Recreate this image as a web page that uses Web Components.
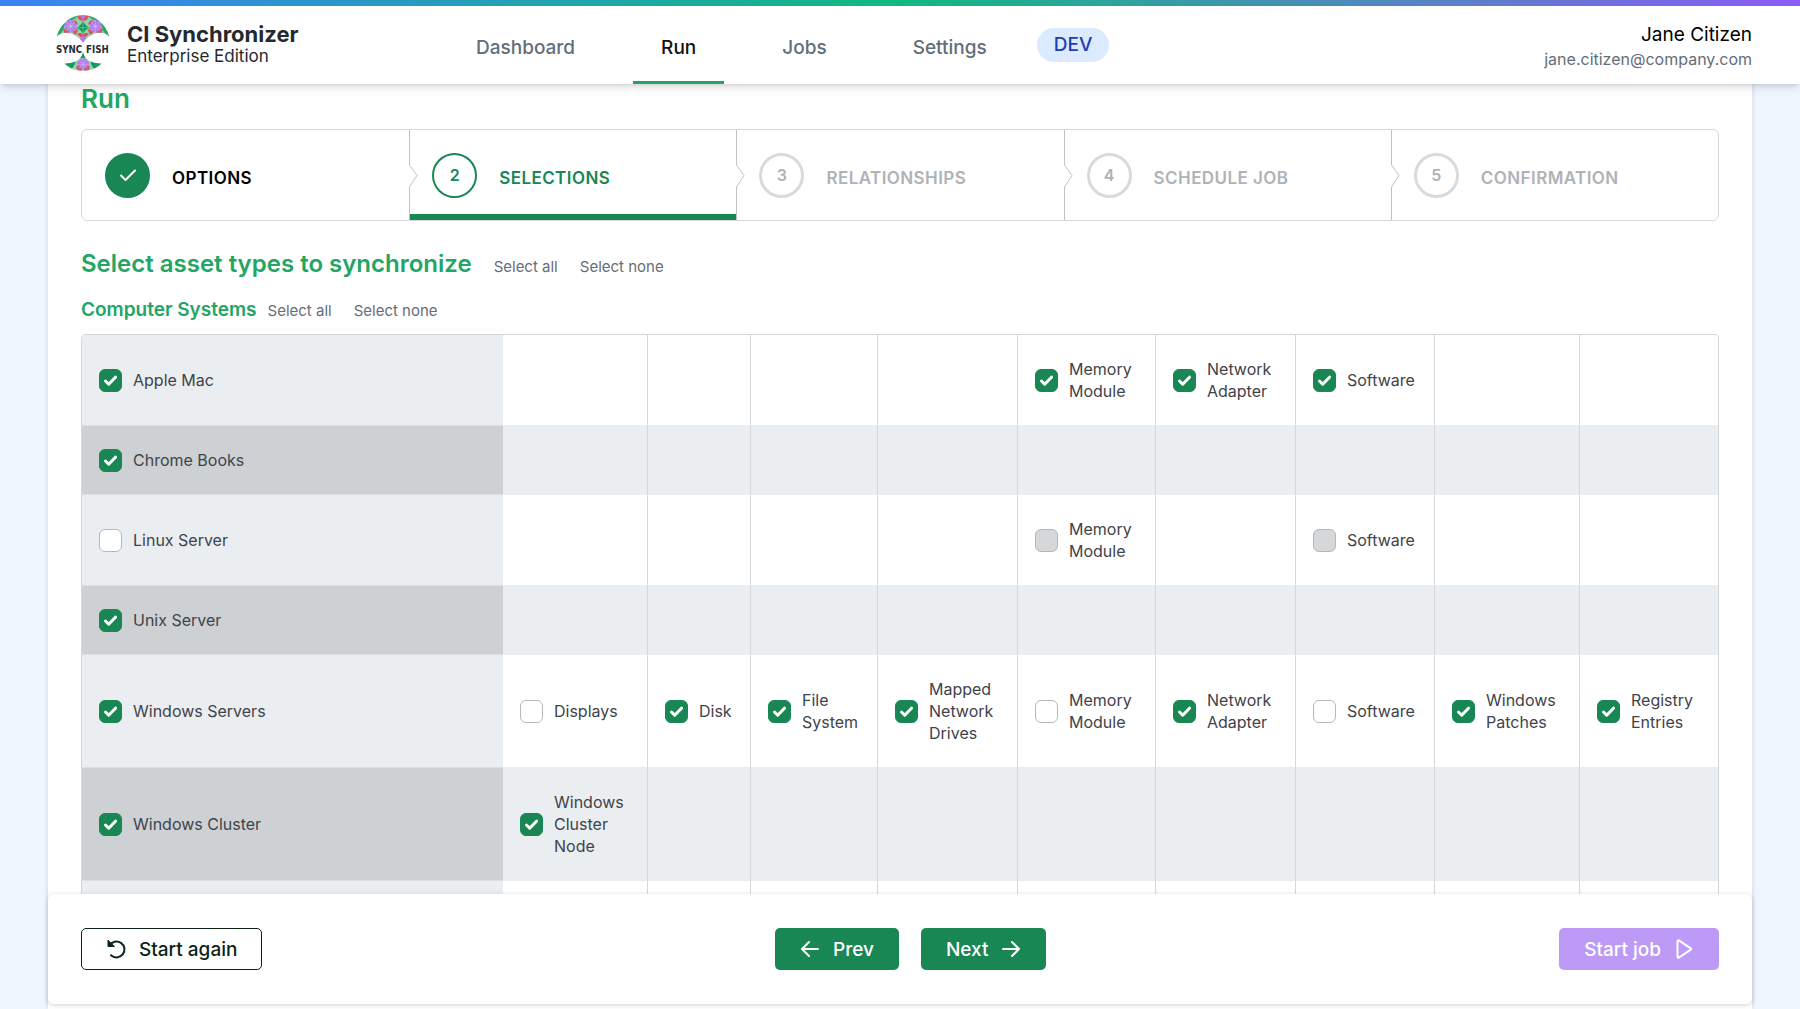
<!DOCTYPE html>
<html lang="en">
<head>
<meta charset="utf-8">
<title>CI Synchronizer – Run</title>
<style>
  :root {
    --green: #22a565;
    --green-strong: #198754;
    --line: #d5d7da;
    --stripe: #eaeef1;
    --stripe-dark: #cdd1d4;
    --ink: #3f434a;
    --muted: #646d7a;
  }
  * { box-sizing: border-box; }
  body {
    margin: 0;
    height: 100vh;
    display: flex;
    flex-direction: column;
    overflow: hidden;
    background: #eff6ff;
    color: #000;
    font: 16px/22px Inter, "Liberation Sans", sans-serif;
  }
</style>
</head>
<body>
<ci-header>
  <ci-nav-link href="#dashboard">Dashboard</ci-nav-link>
  <ci-nav-link href="#run" current>Run</ci-nav-link>
  <ci-nav-link href="#jobs">Jobs</ci-nav-link>
  <ci-nav-link href="#settings">Settings</ci-nav-link>
  <span slot="env">DEV</span>
  <span slot="user">Jane Citizen</span>
  <span slot="email">jane.citizen@company.com</span>
</ci-header>
<ci-panel>
  <ci-heading level="1">Run</ci-heading>
  <ci-stepper>
    <ci-step state="done" number="1">OPTIONS</ci-step>
    <ci-step state="active" number="2">SELECTIONS</ci-step>
    <ci-step number="3">RELATIONSHIPS</ci-step>
    <ci-step number="4">SCHEDULE JOB</ci-step>
    <ci-step number="5">CONFIRMATION</ci-step>
  </ci-stepper>
  <ci-heading level="2" selectable>Select asset types to synchronize</ci-heading>
  <ci-heading level="3" selectable>Computer Systems</ci-heading>
  <ci-asset-table></ci-asset-table>
  <ci-actions slot="footer">
    <ci-button slot="start" kind="outline" icon="restart">Start again</ci-button>
    <ci-button kind="primary" icon="left">Prev</ci-button>
    <ci-button kind="primary" icon-after="right">Next</ci-button>
    <ci-button slot="end" kind="job" icon-after="play" disabled>Start job</ci-button>
  </ci-actions>
</ci-panel>

<script>
const BASE = `*, *::before { box-sizing: border-box; } svg { display: block; flex: none; }`;

class Base extends HTMLElement {
  connectedCallback() {
    if (this.shadowRoot) return;
    this.attachShadow({ mode: "open" }).innerHTML = `<style>${BASE}</style>` + this.render();
  }
}

const LOGO = `
<svg width="56" height="58" viewBox="0 0 168 174" role="img" aria-label="Sync Fish">
  <defs>
    <clipPath id="dome"><path d="M5 68C18 28 46 4 84 4S150 28 163 68C150 54 128 54 112 62C100 68 92 74 84 86C76 74 68 68 56 62C40 54 18 54 5 68Z"/></clipPath>
    <clipPath id="tail"><path d="M84 114C88 136 106 148 140 149C124 164 104 170 84 170S44 164 28 149C62 148 80 136 84 114Z"/></clipPath>
  </defs>
  <g clip-path="url(#dome)">
    <rect width="168" height="90" fill="#8fd4ae"/>
    <path d="M0 75Q8 38 32 26Q24 60 0 75ZM168 75Q160 38 136 26Q144 60 168 75Z" fill="#2fa568"/>
    <path d="M28 22Q44 4 68 4Q62 18 44 20ZM140 22Q124 4 100 4Q106 18 124 20Z" fill="#35a86c"/>
    <circle cx="47" cy="37" r="19" fill="#b57bee"/><circle cx="121" cy="37" r="19" fill="#b57bee"/>
    <path d="M24 46Q34 42 44 58L30 64ZM56 18Q68 20 68 32Q58 30 56 18ZM144 46Q134 42 124 58L138 64ZM112 18Q100 20 100 32Q110 30 112 18ZM54 56Q60 44 70 46Q68 58 60 62ZM114 56Q108 44 98 46Q100 58 108 62Z" fill="#db555c"/>
    <circle cx="84" cy="3" r="18" fill="#db555c"/><path d="M72 0H96L84 17Z" fill="#b57bee"/>
    <path d="M84 20Q89 34 104 41Q89 46 84 60Q79 46 64 41Q79 34 84 20Z" fill="#18995a"/>
    <path d="M66 60Q76 54 84 60Q92 54 102 60L84 76Z" fill="#db555c"/><path d="M84 64L94 74L84 90L74 74Z" fill="#b57bee"/>
    <path d="M47 18V56M28 37H66M121 18V56M102 37H140M84 18V62M64 41H104M33 23L61 51M61 23L33 51M107 23L135 51M135 23L107 51" stroke="#dff3e8" stroke-width="1"/>
  </g>
  <g clip-path="url(#tail)">
    <rect y="108" width="168" height="66" fill="#8fd4ae"/>
    <path d="M26 147Q50 148 62 140Q58 158 50 164ZM142 147Q118 148 106 140Q110 158 118 164Z" fill="#18995a"/>
    <path d="M84 112L92 132H76Z" fill="#18995a"/>
    <circle cx="84" cy="151" r="18" fill="#b57bee"/>
    <path d="M64 155Q76 155 82 171H66ZM104 155Q92 155 86 171H102Z" fill="#db555c"/>
    <path d="M84 133V170M66 151H102M71 138L97 164M97 138L71 164" stroke="#ecdffa" stroke-width="1"/>
  </g>
  <text x="42" y="117" text-anchor="middle">SYNC</text>
  <text x="127" y="117" text-anchor="middle">FISH</text>
</svg>`;

customElements.define("ci-header", class extends Base {
  render() {
    return `<style>
      :host { display: block; flex: none; position: relative; z-index: 2; background: #fff;
        box-shadow: 0 5px 8px -1px rgb(0 0 0 / .12), 0 2px 4px -2px rgb(0 0 0 / .12); }
      .bar { height: 6px; background: linear-gradient(to right, #3b82f6, #10b981, #8b5cf6); }
      .row { display: flex; height: 78px; padding: 0 48px; align-items: stretch; }
      .brand { flex: none; width: 400px; display: flex; align-items: center; gap: 16px; padding: 0 0 4px 7px; color: #24292f; }
      .brand strong { display: block; font-size: 22px; line-height: 26px; font-weight: 700; }
      .brand span { display: block; font-size: 17px; line-height: 18px; }
      text { font: 700 29px "Liberation Sans Narrow", "DejaVu Sans Condensed", sans-serif; fill: #2b2d31; }
      nav { display: flex; gap: 30px; }
      .env { align-self: center; margin-left: 22px; padding: 6px 17px; border-radius: 17px; background: #dbeafe; color: #1e40af; font-weight: 500; font-size: 19px; line-height: 22px; }
      .who { margin-left: auto; text-align: right; align-self: center; display: grid; padding-top: 2px; }
      .user { font-size: 19px; line-height: 26px; }
      .mail { font-size: 16px; line-height: 22px; color: var(--muted); }
    </style>
    <header>
      <div class="bar"></div>
      <div class="row">
        <div class="brand">${LOGO}<div><strong>CI Synchronizer</strong><span>Enterprise Edition</span></div></div>
        <nav><slot></slot></nav>
        <div class="env"><slot name="env"></slot></div>
        <div class="who"><div class="user"><slot name="user"></slot></div><div class="mail"><slot name="email"></slot></div></div>
      </div>
    </header>`;
  }
});

customElements.define("ci-nav-link", class extends Base {
  render() {
    return `<style>
      :host { display: flex; }
      a { display: flex; align-items: center; padding: 8px 28px 0; border-bottom: 3px solid transparent;
        color: var(--muted); font-size: 19px; font-weight: 500; text-decoration: none; }
      :host([current]) a { color: #111; border-color: var(--green); }
    </style><a href="${this.getAttribute("href")}"><slot></slot></a>`;
  }
});

customElements.define("ci-panel", class extends Base {
  render() {
    return `<style>
      :host { display: flex; flex-direction: column; flex: 1; min-height: 0; margin: 0 48px; padding-bottom: 5px;
        background: #fff; box-shadow: 0 0 5px rgb(30 41 90 / .18); }
      main { flex: 1; min-height: 0; overflow: hidden; padding: 0 33px; }
    </style><main><slot></slot></main><slot name="footer"></slot>`;
  }
});

customElements.define("ci-heading", class extends Base {
  render() {
    const n = this.getAttribute("level");
    const links = this.hasAttribute("selectable")
      ? `<button type="button">Select all</button><button type="button">Select none</button>` : "";
    return `<style>
      :host { display: flex; align-items: baseline; color: var(--green); }
      h1, h2, h3 { margin: 0; font-weight: 600; }
      h1 { font-size: 26px; line-height: 30px; margin-bottom: 15px; }
      h2 { font-size: 24px; line-height: 34px; margin: 26px 22px 15px 0; }
      h3 { font-size: 19px; line-height: 28px; margin: 0 11px 10px 0; }
      button { margin: 0 22px 0 0; padding: 0; border: 0; background: none; color: var(--muted);
        font: inherit; font-size: 15px; line-height: 20px; cursor: pointer; }
    </style><h${n}><slot></slot></h${n}>${links}`;
  }
});

customElements.define("ci-stepper", class extends Base {
  render() {
    return `<style>
      :host { display: block; }
      div { display: flex; border: 1px solid var(--line); border-radius: 6px; overflow: hidden; }
    </style><div role="list"><slot></slot></div>`;
  }
});

customElements.define("ci-step", class extends Base {
  render() {
    const n = this.getAttribute("number");
    const mark = this.getAttribute("state") === "done"
      ? `<svg width="24" height="24" viewBox="0 0 24 24" fill="none" stroke="#fff" stroke-width="2" stroke-linecap="round" stroke-linejoin="round"><path d="M5 12.500L9.500 17L19 7.500"/></svg>`
      : n;
    return `<style>
      :host { display: flex; flex: 1; align-items: center; height: 90px; font-weight: 600; color: #afb2b7; }
      .edge { width: 9px; height: 90px; margin-right: 14px; }
      .edge path { fill: none; stroke: #bfc2c6; }
      .dot { display: grid; place-items: center; width: 45px; height: 45px; margin-right: 22px; border: 3px solid #d8dadc; border-radius: 50%; font-size: 16px; }
      .label { padding-top: 6px; font-size: 17px; letter-spacing: .025em; }
      :host([state="done"]) { color: #000; }
      :host([state="done"]) .dot { background: var(--green-strong); border-color: var(--green-strong); }
      :host([state="active"]) { color: var(--green-strong); box-shadow: inset 0 -6px var(--green-strong); }
      :host([state="active"]) .dot { border-width: 2px; border-color: var(--green-strong); }
    </style>
    <svg class="edge" viewBox="0 0 9 90">${n > 1 ? `<path d="M.5 0V35L8 45.500L.5 57V90"/>` : ""}</svg>
    <span class="dot">${mark}</span><span class="label"><slot></slot></span>`;
  }
});

customElements.define("ci-check", class extends Base {
  render() {
    return `<style>
      :host { display: block; }
      label { display: flex; align-items: center; gap: 11px; color: var(--ink); }
      .box { display: grid; flex: none; width: 23px; height: 23px; margin-block: -1px; }
      input, svg { grid-area: 1 / 1; }
      input { appearance: none; margin: 0; width: 23px; height: 23px; border: 1px solid #b4b7bd; border-radius: 6px; background: #fff; }
      input:checked { background: var(--green-strong); border-color: var(--green-strong); }
      input:disabled { background: #d6d7d9; }
      svg { pointer-events: none; visibility: hidden; }
      input:checked + svg { visibility: visible; }
    </style>
    <label><span class="box"><input type="checkbox" ${this.hasAttribute("checked") ? "checked" : ""} ${this.hasAttribute("disabled") ? "disabled" : ""}>
      <svg width="23" height="23" viewBox="0 0 23 23" fill="none" stroke="#fff" stroke-width="3" stroke-linecap="round" stroke-linejoin="round"><path d="M6.500 12L9.700 15.200L16.500 8.200"/></svg></span>
      <span><slot></slot></span></label>`;
  }
});

/* Column keys in display order; a state of 1 is ticked, 0 is clear, -1 is unavailable. */
const COLUMNS = [
  ["display", "Displays", 145], ["disk", "Disk", 103], ["file", "File System", 127],
  ["drives", "Mapped Network Drives", 140], ["memory", "Memory Module", 138], ["network", "Network Adapter", 140],
  ["software", "Software", 139], ["patches", "Windows Patches", 145], ["registry", "Registry Entries", 138]
];
const ROWS = [
  ["Apple Mac", 1, { memory: 1, network: 1, software: 1 }],
  ["Chrome Books", 1, {}],
  ["Linux Server", 0, { memory: -1, software: -1 }],
  ["Unix Server", 1, {}],
  ["Windows Servers", 1, { display: 0, disk: 1, file: 1, drives: 1, memory: 0, network: 1, software: 0, patches: 1, registry: 1 }],
  ["Windows Cluster", 1, { display: [1, "Windows Cluster Node"] }],
  null
];
const check = (text, s) => `<ci-check ${s === 1 ? "checked" : s === -1 ? "disabled" : ""}>${text}</ci-check>`;

customElements.define("ci-asset-table", class extends Base {
  render() {
    const body = ROWS.map(row => {
      if (!row) return `<tr><th></th>${"<td></td>".repeat(COLUMNS.length)}</tr>`;
      const [name, on, cells] = row;
      return `<tr><th scope="row">${check(name, on)}</th>` + COLUMNS.map(([key, text]) => {
        if (!(key in cells)) return "<td></td>";
        const c = cells[key];
        return `<td>${Array.isArray(c) ? check(c[1], c[0]) : check(text, c)}</td>`;
      }).join("") + "</tr>";
    }).join("");
    return `<style>
      :host { display: block; border: 1px solid var(--line); border-radius: 4px 4px 0 0; }
      table { width: 100%; table-layout: fixed; border-collapse: separate; border-spacing: 0; }
      th, td { padding: 23px 10px 23px 17px; font-weight: 400; text-align: left; vertical-align: middle; }
      td { border-right: 1px solid var(--line); }
      td:last-child { border-right: 0; }
      th { background: var(--stripe); }
      tr:nth-child(even) > * { background: var(--stripe); border-top: 1px solid var(--stripe); border-bottom: 1px solid var(--stripe); }
      tr:nth-child(even) > td { border-right-color: var(--line); }
      tr:nth-child(even) > th { background: var(--stripe-dark); border-color: #dde0e3; }
    </style>
    <table><colgroup><col>${COLUMNS.map(c => `<col style="width:${c[2]}px">`).join("")}</colgroup><tbody>${body}</tbody></table>`;
  }
});

customElements.define("ci-actions", class extends Base {
  render() {
    return `<style>
      :host { display: flex; justify-content: space-between; flex: none; align-items: center; padding: 34px 33px; background: #fff;
        border-radius: 6px; position: relative; box-shadow: 0 1px 5px rgb(0 0 0 / .18); }
      div { display: flex; gap: 22px; }
    </style><div><slot name="start"></slot></div><div><slot></slot></div><div><slot name="end"></slot></div>`;
  }
});

const ICONS = {
  restart: `<path d="M2 1.500V7.500H8Z" fill="currentColor" stroke-width="1"/><path d="M3.500 6.500A8 8 0 1 1 5 16.300"/>`,
  left: `<path d="M18 10H2.500M9 3L2 10L9 17"/>`,
  right: `<path d="M2 10H17.500M11 3L18 10L11 17"/>`,
  play: `<path d="M3.500 2.200C3.500 1.400 4.200 1 4.900 1.400L16.800 9.300C17.400 9.700 17.400 10.300 16.800 10.700L4.900 18.600C4.200 19 3.500 18.600 3.500 17.800Z"/>`
};
const icon = name => name ? `<svg width="20" height="20" viewBox="0 0 20 20" fill="none" stroke="currentColor" stroke-width="2" stroke-linecap="round" stroke-linejoin="round" aria-hidden="true">${ICONS[name]}</svg>` : "";

customElements.define("ci-button", class extends Base {
  render() {
    return `<style>
      :host { display: block; }
      button { display: flex; align-items: center; gap: 13px; height: 42px; margin: 0; padding: 0 24px; border: 1px solid transparent; border-radius: 5px;
        font: inherit; font-size: 19px; font-weight: 500; line-height: 24px; color: #fff; background: var(--green-strong); }
      span { padding-top: 2px; }
      :host([kind="outline"]) button { color: #0b2417; background: #fff; border-color: #0b2417; }
      :host([kind="job"]) button { background: #bc9af5; }
    </style><button type="button" ${this.hasAttribute("disabled") ? "disabled" : ""}>${icon(this.getAttribute("icon"))}<span><slot></slot></span>${icon(this.getAttribute("icon-after"))}</button>`;
  }
});
</script>
</body>
</html>
